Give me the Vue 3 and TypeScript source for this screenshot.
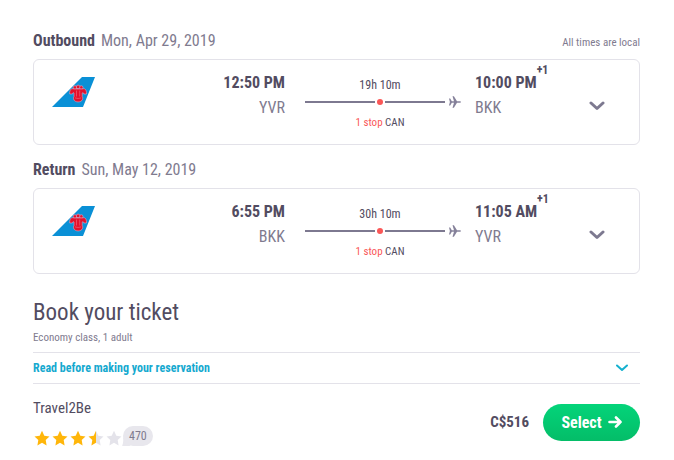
<script setup lang="ts">
interface Flight {
  direction: string
  date: string
  departTime: string
  from: string
  duration: string
  stops: string
  via: string
  arriveTime: string
  dayShift: string
  to: string
}

const flights: Flight[] = [
  {
    direction: 'Outbound',
    date: 'Mon, Apr 29, 2019',
    departTime: '12:50 PM',
    from: 'YVR',
    duration: '19h 10m',
    stops: '1 stop',
    via: 'CAN',
    arriveTime: '10:00 PM',
    dayShift: '+1',
    to: 'BKK',
  },
  {
    direction: 'Return',
    date: 'Sun, May 12, 2019',
    departTime: '6:55 PM',
    from: 'BKK',
    duration: '30h 10m',
    stops: '1 stop',
    via: 'CAN',
    arriveTime: '11:05 AM',
    dayShift: '+1',
    to: 'YVR',
  },
]

const stars: string[] = ['full', 'full', 'full', 'half', 'empty']
const starPath = 'M8 0.8l2.3 4.9 5.2.7-3.8 3.7.9 5.3L8 12.8l-4.6 2.6.9-5.3L.5 6.4l5.2-.7z'
</script>

<template>
  <main class="page">
    <section v-for="(flight, index) in flights" :key="flight.direction" class="leg">
      <header class="leg-header">
        <h2 class="leg-title">
          <strong>{{ flight.direction }}</strong>
          <span class="leg-date">{{ flight.date }}</span>
        </h2>
        <span v-if="index === 0" class="note">All times are local</span>
      </header>

      <article class="card">
        <svg class="airline" viewBox="0 0 43 30" aria-hidden="true">
          <path d="M0 30L30 0H43L31 30z" fill="#0a90d6" />
          <g fill="#e3112d" stroke="#e7a4bc" stroke-width="0.6">
            <circle cx="23" cy="10.500" r="1.800" />
            <circle cx="29.200" cy="10.500" r="1.800" />
            <circle cx="26.100" cy="9.900" r="1.800" />
            <path d="M22 12C19 10.800 17.500 13 17.700 17H20.500C20.500 15.800 21.200 15.400 22 16V19.500C21.400 20.300 21.400 21.300 21.700 22.300C22.600 25.800 29.600 25.800 30.500 22.300C30.800 21.300 30.800 20.300 30.200 19.500V16C31 15.400 31.700 15.800 31.700 17H34.500C34.700 13 33.200 10.800 30.200 12z" />
          </g>
          <path
            d="M24.500 13.500v6M27.700 13.500v6M23 20.900q3.100 1.200 6.200 0"
            fill="none"
            stroke="#ee8599"
            stroke-width="0.500"
          />
        </svg>

        <div class="place departure">
          <span class="time">{{ flight.departTime }}</span>
          <span class="code">{{ flight.from }}</span>
        </div>

        <div class="journey">
          <span class="duration">{{ flight.duration }}</span>
          <div class="track">
            <span class="line before"></span>
            <span class="dot"></span>
            <span class="line after"></span>
            <svg class="plane" viewBox="0 0 12 12" aria-hidden="true">
              <path
                d="M0 2.500h1.200L2.800 5.200H5L3.500.2h1.400L8 5.200h3c1.300 0 1.300 1.600 0 1.600H8L4.900 11.800H3.500L5 6.800H2.800L1.200 9.500H0L.9 6z"
                fill="#85819a"
              />
            </svg>
          </div>
          <span class="stops"><em>{{ flight.stops }}</em> {{ flight.via }}</span>
        </div>

        <div class="place">
          <span class="time">{{ flight.arriveTime }}<sup class="shift">{{ flight.dayShift }}</sup></span>
          <span class="code">{{ flight.to }}</span>
        </div>

        <button class="expand" type="button" :aria-label="`${flight.direction} flight details`">
          <svg viewBox="0 0 16 10" aria-hidden="true">
            <path d="M2 2l6 5.500L14 2" fill="none" stroke="#7d7990" stroke-width="3" stroke-linecap="round" stroke-linejoin="round" />
          </svg>
        </button>
      </article>
    </section>

    <section class="booking">
      <h1 class="booking-title">Book your ticket</h1>
      <p class="booking-sub">Economy class, 1 adult</p>

      <button class="notice" type="button">
        <span>Read before making your reservation</span>
        <svg viewBox="0 0 12 8" aria-hidden="true">
          <path d="M1 1.500l5 4.500 5-4.500" fill="none" stroke="#15b1cf" stroke-width="2" stroke-linecap="round" stroke-linejoin="round" />
        </svg>
      </button>

      <div class="offer">
        <div class="provider">
          <span class="provider-name">Travel2Be</span>
          <div class="rating">
            <div class="stars" role="img" aria-label="3.5 out of 5">
              <svg v-for="(kind, i) in stars" :key="i" viewBox="0 0 16 16">
                <defs v-if="kind === 'half'">
                  <linearGradient id="half-star">
                    <stop offset="50%" stop-color="#ffb60a" />
                    <stop offset="50%" stop-color="#e4e3ea" />
                  </linearGradient>
                </defs>
                <path :d="starPath" :class="kind" />
              </svg>
            </div>
            <span class="reviews">
              470
              <svg class="tail" viewBox="0 0 10 12" aria-hidden="true"><path d="M2 0Q3 7 0 11Q6 11 10 8z" fill="#e8e7ed" /></svg>
            </span>
          </div>
        </div>
        <strong class="price">C$516</strong>
        <button class="select" type="button">
          <span>Select</span>
          <svg viewBox="0 0 14 12" aria-hidden="true">
            <path d="M1.500 6h11M8 1.500L12.500 6 8 10.500" fill="none" stroke="#fff" stroke-width="2.600" stroke-linecap="round" stroke-linejoin="round" />
          </svg>
        </button>
      </div>
    </section>
  </main>
</template>

<style>
body {
  margin: 0;
  background: #fff;
}
</style>

<style scoped>
.page {
  padding: 29px 34px 0 33px;
  color: #524c61;
  font-family: "Roboto Condensed", "Liberation Sans Narrow", "Liberation Sans", sans-serif;
  font-size: 16px;
}

h1,
h2,
p {
  margin: 0;
  font-weight: 400;
}

button {
  padding: 0;
  border: 0;
  background: none;
  font-family: inherit;
  cursor: pointer;
}

svg {
  display: block;
}

.leg {
  margin-bottom: 13px;
}

.leg-header {
  display: flex;
  align-items: center;
  justify-content: space-between;
  height: 24px;
  margin-bottom: 6px;
  line-height: 24px;
}

.leg-title {
  display: flex;
  gap: 6px;
  font-size: 16px;
}

.leg-date,
.code {
  color: #7f7b8f;
}

.note {
  padding-top: 4px;
  color: #7f7b8f;
  font-size: 11px;
}

.card {
  display: grid;
  grid-template-columns: 1fr 80px 162px 100px 16px;
  column-gap: 14px;
  padding: 12px 34px 13px 18px;
  border: 1px solid #e3e2e9;
  border-radius: 6px;
}

.airline {
  width: 43px;
  height: 30px;
  margin-top: 5px;
}

.place {
  display: flex;
  flex-direction: column;
  align-items: flex-start;
}

.departure {
  align-items: flex-end;
}

.time {
  position: relative;
  font-weight: 700;
  line-height: 22px;
}

.shift {
  position: absolute;
  top: -9px;
  left: 100%;
  font-size: 12px;
  line-height: 14px;
}

.code {
  line-height: 28px;
}

.journey {
  display: flex;
  flex-direction: column;
  padding: 5px 0 0 6px;
  font-size: 12px;
  line-height: 16px;
}

.duration,
.stops {
  width: 150px;
  text-align: center;
}

.stops {
  padding-top: 4px;
  font-size: 11px;
}

.stops em {
  color: #fa5757;
  font-style: normal;
}

.track {
  display: flex;
  align-items: center;
  height: 18px;
}

.line {
  height: 2px;
  background: #7d7990;
}

.before {
  flex: 7;
}

.after {
  flex: 6;
}

.dot {
  width: 6px;
  height: 6px;
  margin: 0 2px;
  border-radius: 50%;
  background: #fa5757;
}

.plane {
  width: 12px;
  height: 12px;
  margin-left: 4px;
}

.expand {
  align-self: center;
  padding-top: 8px;
}

.expand svg {
  width: 16px;
  height: 10px;
}

.booking {
  padding-top: 9px;
}

.booking-title {
  font-size: 23px;
  line-height: 34px;
}

.booking-sub {
  margin-bottom: 7px;
  color: #7f7b8f;
  font-size: 11px;
  line-height: 15px;
}

.notice {
  display: flex;
  align-items: center;
  justify-content: space-between;
  width: 100%;
  height: 32px;
  padding-right: 12px;
  border-top: 1px solid #e3e2e9;
  border-bottom: 1px solid #e3e2e9;
  color: #15a9cf;
  font-size: 12px;
  font-weight: 700;
}

.notice svg {
  width: 12px;
  height: 8px;
}

.offer {
  display: flex;
  align-items: center;
  gap: 14px;
  padding-top: 14px;
}

.provider {
  flex: 1;
}

.provider-name {
  display: block;
  font-size: 15px;
  line-height: 20px;
}

.rating {
  display: flex;
  gap: 1px;
  padding-top: 8px;
}

.stars {
  display: flex;
  align-items: center;
  gap: 2px;
  padding: 4px 0 0 1px;
}

.stars svg {
  width: 16px;
  height: 16px;
}

.full {
  fill: #ffb60a;
}

.half {
  fill: url(#half-star);
}

.empty {
  fill: #e4e3ea;
}

.reviews {
  position: relative;
  height: 20px;
  padding: 0 6px;
  border-radius: 10px;
  background: #e8e7ed;
  color: #7f7b8f;
  font-size: 12px;
  line-height: 20px;
}

.tail {
  position: absolute;
  bottom: -3px;
  left: -2px;
  width: 10px;
  height: 12px;
}

.price {
  font-size: 15px;
}

.select {
  display: flex;
  align-items: center;
  justify-content: center;
  gap: 6px;
  width: 97px;
  height: 37px;
  border-radius: 19px;
  background: linear-gradient(#04d47a, #04bd68);
  color: #fff;
  font-size: 16px;
  font-weight: 700;
}

.select svg {
  width: 14px;
  height: 12px;
}
</style>
